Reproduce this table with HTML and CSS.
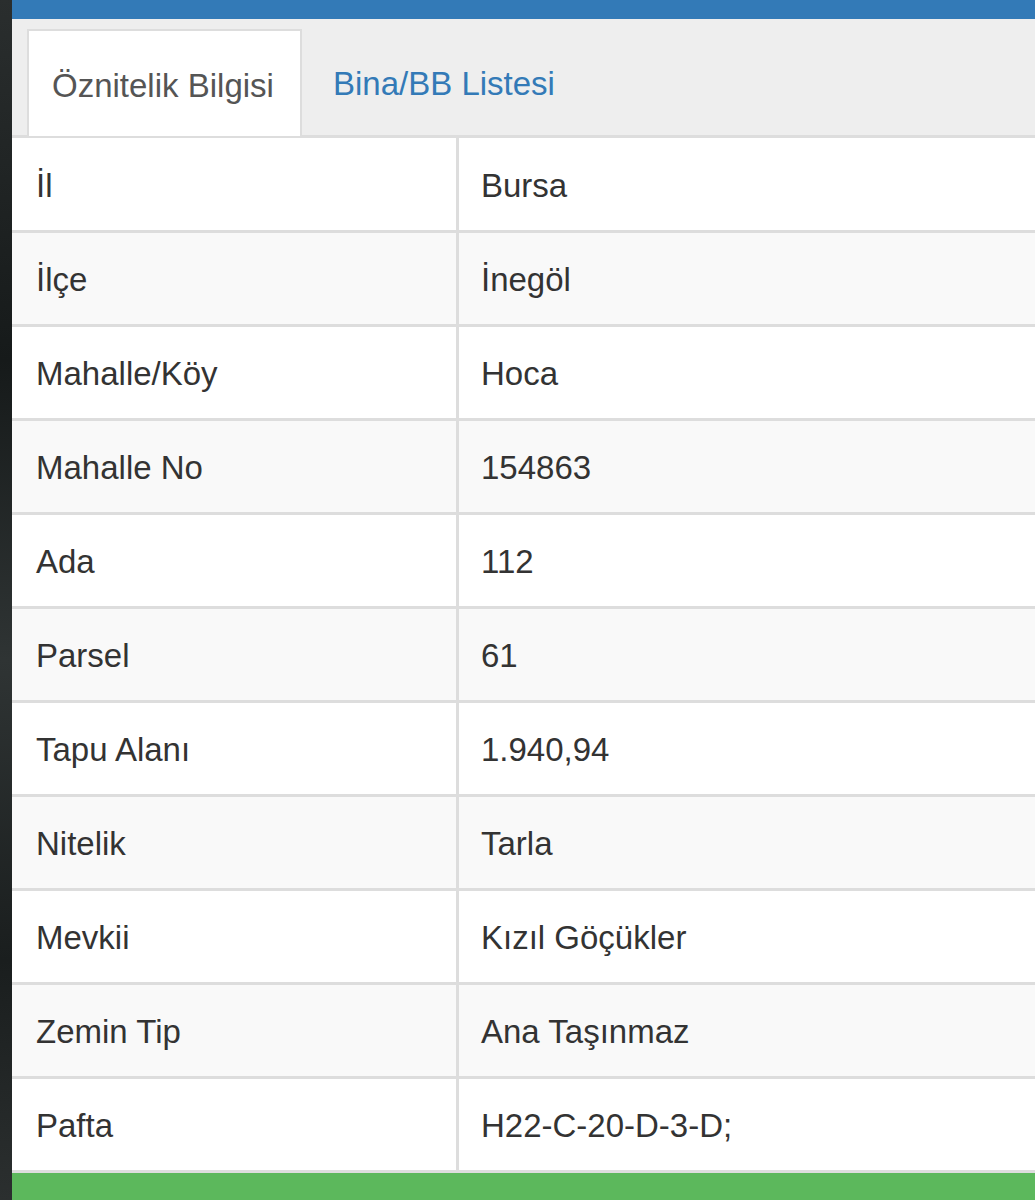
FILE: index.html
```html
<!DOCTYPE html>
<html lang="tr">
<head>
<meta charset="utf-8">
<link rel="stylesheet" href="styles.css">
</head>
<body>
<div class="frame">
  <div class="side"></div>
  <div class="panel">
    <div class="topbar"></div>
    <div class="tabs">
      <div class="tab active">Öznitelik Bilgisi</div>
      <div class="tab link">Bina/BB Listesi</div>
    </div>
    <div class="table">
      <div class="row"><div class="label">İl</div><div class="value">Bursa</div></div>
      <div class="row"><div class="label">İlçe</div><div class="value">İnegöl</div></div>
      <div class="row"><div class="label">Mahalle/Köy</div><div class="value">Hoca</div></div>
      <div class="row"><div class="label">Mahalle No</div><div class="value">154863</div></div>
      <div class="row"><div class="label">Ada</div><div class="value">112</div></div>
      <div class="row"><div class="label">Parsel</div><div class="value">61</div></div>
      <div class="row"><div class="label">Tapu Alanı</div><div class="value">1.940,94</div></div>
      <div class="row"><div class="label">Nitelik</div><div class="value">Tarla</div></div>
      <div class="row"><div class="label">Mevkii</div><div class="value">Kızıl Göçükler</div></div>
      <div class="row"><div class="label">Zemin Tip</div><div class="value">Ana Taşınmaz</div></div>
      <div class="row"><div class="label">Pafta</div><div class="value">H22-C-20-D-3-D;</div></div>
    </div>
    <div class="greenbar"></div>
  </div>
</div>
</body>
</html>
```
FILE: styles.css
```css
html, body {
  margin: 0;
  padding: 0;
  background: #1f2424;
}
body {
  font-family: "Liberation Sans", Arial, sans-serif;
  font-size: 33px;
  color: #333333;
  overflow: hidden;
}
.frame {
  display: flex;
  width: 1035px;
  height: 1200px;
}
.side {
  width: 12px;
  flex: none;
  background: linear-gradient(180deg, #2a2e2e 0%, #161a1a 30%, #2f3434 55%, #1a1e1e 80%, #2b2f2f 100%);
}
.panel {
  flex: 1;
  display: flex;
  flex-direction: column;
  background: #ffffff;
}
.topbar {
  height: 19px;
  background: #337ab7;
  flex: none;
}
.tabs {
  height: 116px;
  background: #eeeeee;
  border-bottom: 3px solid #dddddd;
  display: flex;
  align-items: flex-end;
  padding-left: 15px;
  flex: none;
}
.tab {
  height: 107px;
  display: flex;
  align-items: center;
  box-sizing: border-box;
  line-height: 1;
  padding-top: 3px;
}
.tab.active {
  width: 275px;
  background: #ffffff;
  border: 2px solid #dddddd;
  border-bottom: none;
  color: #555555;
  padding-left: 23px;
  margin-bottom: -1px;
}
.tab.link {
  color: #337ab7;
  padding-left: 31px;
}
.table {
  display: flex;
  flex-direction: column;
  flex: none;
}
.row {
  display: flex;
  height: 91px;
  border-bottom: 3px solid #dddddd;
}
.row:first-child {
  height: 92px;
}
.row:nth-child(even) {
  background: #f9f9f9;
}
.label {
  width: 420px;
  padding-left: 24px;
  padding-top: 3px;
  border-right: 3px solid #dddddd;
  display: flex;
  align-items: center;
  flex: none;
}
.value {
  padding-left: 22px;
  padding-top: 3px;
  display: flex;
  align-items: center;
}
.greenbar {
  flex: 1;
  background: #5cb85c;
}
```
